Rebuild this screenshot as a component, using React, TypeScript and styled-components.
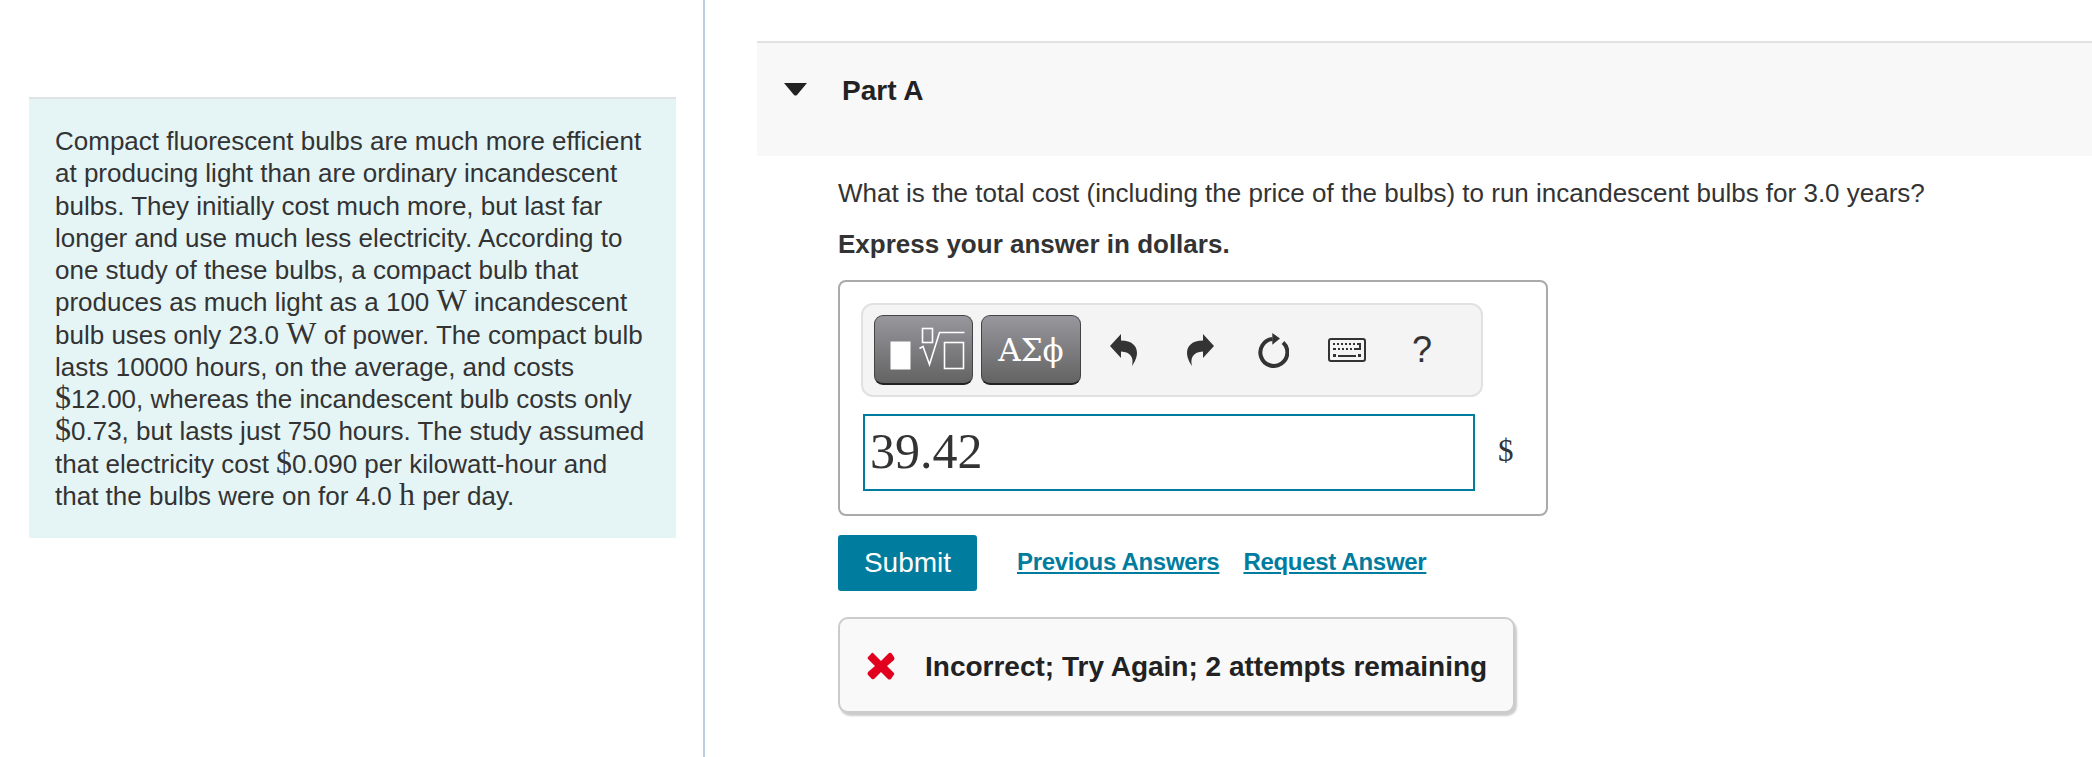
import React from "react";
import styled, { createGlobalStyle } from "styled-components";

const Global = createGlobalStyle`
  html, body { margin: 0; padding: 0; background: #fff; }
  body { font-family: "Liberation Sans", Arial, sans-serif; color: #333; }
`;

const Page = styled.div`
  display: flex;
  width: 2092px;
  height: 757px;
  overflow: hidden;
`;

const LeftColumn = styled.aside`
  box-sizing: border-box;
  width: 705px;
  flex: none;
  padding: 97px 27px 0 29px;
  border-right: 2px solid #bccde0;
`;

const Intro = styled.div`
  box-sizing: border-box;
  height: 441px;
  padding: 26px 24px 0 26px;
  background: #e5f5f6;
  border-top: 2px solid #dfe3e3;
  font-size: 26px;
  line-height: 32.25px;
`;

const Unit = styled.span`
  font-family: "Liberation Serif", serif;
  font-size: 32px;
  line-height: 20px;
`;

const RightColumn = styled.main`
  flex: 1;
  min-width: 0;
  padding: 41px 0 0 52px;
`;

const PartHeader = styled.div`
  box-sizing: border-box;
  height: 115px;
  display: flex;
  align-items: flex-start;
  background: #f8f8f8;
  border-top: 2px solid #e2e2e2;
  padding: 31px 0 0 27px;
`;

const Caret = styled.svg`
  width: 23px;
  height: 13px;
  margin: 9px 35px 0 0;
  fill: #222;
`;

const PartTitle = styled.h2`
  margin: 0;
  font-size: 28px;
  line-height: 34px;
  font-weight: 700;
  color: #222;
`;

const Body = styled.div`
  padding: 21px 0 0 81px;
`;

const Question = styled.p`
  margin: 0;
  font-size: 26px;
  line-height: 32px;
`;

const Instruction = styled.p`
  margin: 19px 0 0;
  font-size: 26px;
  line-height: 32px;
  font-weight: 700;
`;

const AnswerBox = styled.div`
  box-sizing: border-box;
  width: 710px;
  height: 236px;
  margin-top: 20px;
  padding: 21px 0 0 21px;
  border: 2px solid #aaa;
  border-radius: 8px;
`;

const Toolbar = styled.div`
  box-sizing: border-box;
  width: 622px;
  height: 94px;
  display: flex;
  align-items: center;
  padding: 0 0 0 11px;
  background: #f4f4f4;
  border: 2px solid #e1e1e1;
  border-radius: 12px;
`;

const TemplateButton = styled.button<{ $w: number }>`
  box-sizing: border-box;
  width: ${(p) => p.$w}px;
  height: 70px;
  margin-right: 8px;
  padding: 0;
  display: flex;
  flex: none;
  align-items: center;
  justify-content: center;
  color: #fff;
  border: 1px solid #444;
  border-bottom: 2px solid #222;
  border-radius: 9px;
  background: linear-gradient(#98979d, #636363);
  font-family: "DejaVu Serif", "Liberation Serif", serif;
  font-size: 31px;
`;

const ToolIcon = styled.span<{ $w: number }>`
  width: ${(p) => p.$w}px;
  flex: none;
  display: flex;
  justify-content: center;
  align-items: center;
  color: #333;
  font-size: 36px;
  line-height: 40px;
`;

const AnswerRow = styled.div`
  display: flex;
  align-items: center;
  margin-top: 17px;
`;

const AnswerInput = styled.div`
  box-sizing: border-box;
  width: 612px;
  height: 77px;
  margin-left: 2px;
  padding: 0 5px 4px;
  display: flex;
  align-items: center;
  border: 2px solid #007c9e;
  font-family: "Liberation Serif", serif;
  font-size: 50px;
`;

const UnitLabel = styled.span`
  margin-left: 23px;
  padding-bottom: 3px;
  font-family: "Liberation Serif", serif;
  font-size: 31px;
`;

const Actions = styled.div`
  display: flex;
  align-items: center;
  margin-top: 19px;
`;

const Submit = styled.button`
  width: 139px;
  height: 56px;
  padding: 0;
  border: none;
  border-radius: 3px;
  background: #007c9e;
  color: #fff;
  font-family: inherit;
  font-size: 28px;
`;

const ActionLink = styled.a<{ $gap: number }>`
  margin-left: ${(p) => p.$gap}px;
  padding-bottom: 2px;
  color: #007c9e;
  font-size: 24px;
  letter-spacing: -0.3px;
  font-weight: 700;
  text-decoration: underline;
`;

const Feedback = styled.div`
  box-sizing: border-box;
  width: 677px;
  height: 96px;
  margin-top: 26px;
  padding: 2px 0 0 27px;
  display: flex;
  align-items: center;
  background: #f9f9f9;
  border: 2px solid #ccc;
  border-radius: 10px;
  box-shadow: 2px 3px 2px #ccc;
`;

const FeedbackText = styled.span`
  margin-left: 30px;
  padding-top: 2px;
  font-size: 28px;
  font-weight: 700;
  color: #222;
`;

const Radical = () => (
  <svg width="96" height="64" viewBox="0 0 96 64" fill="none" stroke="#fff">
    <rect x="14.5" y="23.5" width="20" height="28" fill="#fff" stroke="none" />
    <rect x="46.5" y="10.5" width="10" height="14" strokeWidth="1.6" />
    <path d="M43.5 30.5 L47 28.5 L53.5 46.5 L63.5 14.5 H88.5" strokeWidth="1.6" />
    <rect x="68.5" y="24.5" width="19" height="26" strokeWidth="1.6" />
  </svg>
);

const ReplyArrow = ({ flip }: { flip?: boolean }) => (
  <svg width="27" height="32" viewBox="0 0 27 32" fill="#333" transform={flip ? "scale(-1 1)" : undefined}>
    <path d="M0 12 L11 0 V6.5 C22 6.5 27 12 27 19 C27 24 24 29 22 32 C24 24 21 18 11 17.5 V24 Z" />
  </svg>
);

const Restart = () => (
  <svg width="32" height="35" viewBox="0 0 32 35" fill="none">
    <path d="M26 9.5 A13.5 13.5 0 1 1 15.5 6" stroke="#333" strokeWidth="4" />
    <path d="M15.3 0 L23 5.5 L15.3 11.7 Z" fill="#333" />
  </svg>
);

const Keyboard = () => (
  <svg width="38" height="24" viewBox="0 0 38 24">
    <rect x="1" y="1" width="36" height="22" rx="2" fill="#f4f4f4" stroke="#333" strokeWidth="2" />
    <path
      d="M5 5h2v2H5zM9 5h2v2H9zM13 5h2v2h-2zM17 5h2v2h-2zM21 5h2v2h-2zM25 5h2v2h-2zM29 5h4v7H26v-2h5V7h-2zM5 10h3v2H5zM10 10h2v2h-2zM14 10h2v2h-2zM18 10h2v2h-2zM22 10h2v2h-2zM5 16h3v3H5zM10 17h18v2H10zM30 16h3v3h-3z"
      fill="#333"
    />
  </svg>
);

export default function App() {
  return (
    <Page>
      <Global />
      <LeftColumn>
        <Intro>
          Compact fluorescent bulbs are much more efficient at producing light than are ordinary
          incandescent bulbs. They initially cost much more, but last far longer and use much less
          electricity. According to one study of these bulbs, a compact bulb that produces as much
          light as a 100 <Unit>W</Unit> incandescent bulb uses only 23.0 <Unit>W</Unit> of power.
          The compact bulb lasts 10000 hours, on the average, and costs <Unit>$</Unit>12.00,
          whereas the incandescent bulb costs only <Unit>$</Unit>0.73, but lasts just 750 hours.
          The study assumed that electricity cost <Unit>$</Unit>0.090 per kilowatt-hour and that
          the bulbs were on for 4.0 <Unit>h</Unit> per day.
        </Intro>
      </LeftColumn>
      <RightColumn>
        <PartHeader>
          <Caret viewBox="0 0 23 13">
            <path d="M0 0H23L13 12Q11.5 13 10 12Z" />
          </Caret>
          <PartTitle>Part A</PartTitle>
        </PartHeader>
        <Body>
          <Question>
            What is the total cost (including the price of the bulbs) to run incandescent bulbs for
            3.0 years?
          </Question>
          <Instruction>Express your answer in dollars.</Instruction>
          <AnswerBox>
            <Toolbar>
              <TemplateButton $w={99}>
                <Radical />
              </TemplateButton>
              <TemplateButton $w={100}>ΑΣϕ</TemplateButton>
              <ToolIcon $w={68}>
                <ReplyArrow />
              </ToolIcon>
              <ToolIcon $w={86}>
                <ReplyArrow flip />
              </ToolIcon>
              <ToolIcon $w={60}>
                <Restart />
              </ToolIcon>
              <ToolIcon $w={88}>
                <Keyboard />
              </ToolIcon>
              <ToolIcon $w={62}>?</ToolIcon>
            </Toolbar>
            <AnswerRow>
              <AnswerInput>39.42</AnswerInput>
              <UnitLabel>$</UnitLabel>
            </AnswerRow>
          </AnswerBox>
          <Actions>
            <Submit>Submit</Submit>
            <ActionLink href="#" $gap={40}>Previous Answers</ActionLink>
            <ActionLink href="#" $gap={24}>Request Answer</ActionLink>
          </Actions>
          <Feedback>
            <svg width="28" height="28" viewBox="0 0 28 28">
              <path d="M6 1 L14 9 L22 1 Q24 0 25 2 L27 5 Q28 6 27 8 L20 14 L27 21 Q28 22 26 24 L24 27 Q22 28 21 27 L14 20 L7 27 Q5 28 4 26 L1 23 Q0 22 1 20 L8 14 L1 7 Q0 6 1 5 L4 2 Q5 0 6 1Z" fill="#e2001f" />
            </svg>
            <FeedbackText>Incorrect; Try Again; 2 attempts remaining</FeedbackText>
          </Feedback>
        </Body>
      </RightColumn>
    </Page>
  );
}
